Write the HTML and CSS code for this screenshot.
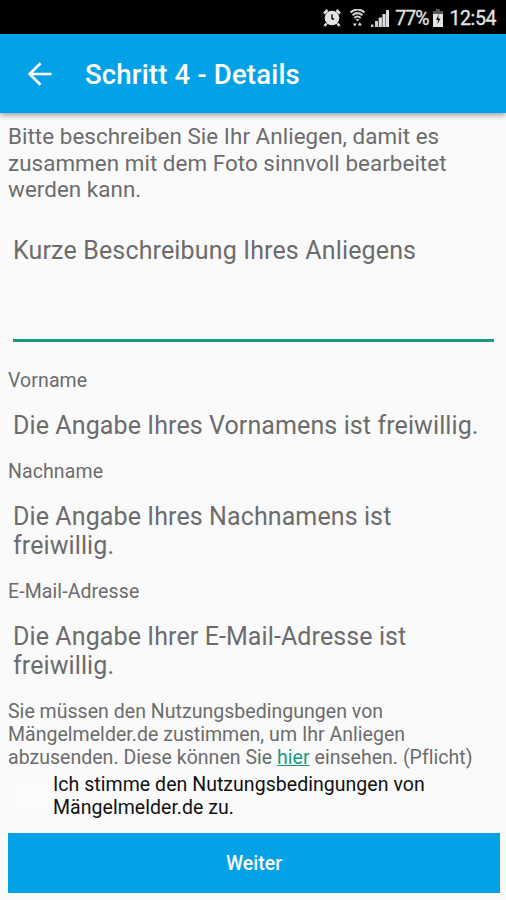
FILE: index.html
```html
<!DOCTYPE html>
<html lang="de">
<head>
	<meta charset="utf-8">
	<title>Schritt 4 - Details</title>
	<link rel="stylesheet" href="styles.css">
</head>
<body>
	<div class="statusbar">
		<svg class="alarm" width="18" height="18" viewBox="0 0 18 18">
			<path d="M1 4.5L4.5 1M13.5 1L17 4.5M3.5 14.5L1.5 17M14.5 14.5L16.5 17" stroke="#ddd" stroke-width="2.6"/>
			<circle cx="9" cy="9" r="7.3" fill="#e4e4e4"/>
			<path d="M9 5.500v4l2 1" stroke="#111" stroke-width="1.5" fill="none"/>
		</svg>
		<svg class="wifi" width="15" height="18" viewBox="0 0 15 18">
			<path d="M0.5 3.5Q7.5 -2.5 14.5 3.5M2.5 6.3Q7.5 2 12.5 6.3M4.3 9Q7.5 6 10.7 9" stroke="#ccc" stroke-width="2.1" fill="none"/>
			<path d="M5.500 10h4L7.500 12.500z" fill="#ccc"/>
			<path d="M2.8 14.500h4L4.800 17.500zM7.800 16.500h4L9.800 13z" fill="#ddd"/>
		</svg>
		<svg class="signal" width="18" height="18" viewBox="0 0 18 18">
			<path d="M0 15.500h2.500V18H0zM4 12h3v6H4z" fill="#ccc"/>
			<path d="M7.700 8.500h3.200V18H7.700zM11.400 5h3.200v13h-3.200zM15 1h3v17h-3z" fill="#ddd"/>
		</svg>
		<span class="percent">77%</span>
		<svg class="battery" width="10" height="18" viewBox="0 0 10 18">
			<path d="M3 0h4v2h3v3H0V2h3z" fill="#555"/>
			<path d="M0 5h10v13H0z" fill="#e4e4e4"/>
			<path d="M5.800 5L3 11h2.200L4.300 15.500 7.500 9.500H5.200z" fill="#111"/>
		</svg>
		<span class="clock">12:54</span>
	</div>
	<header class="toolbar">
		<svg class="back" width="24" height="24" viewBox="0 0 24 24">
			<path d="M23.500 12H2M12.500 1.200L1.700 12l10.800 10.800" stroke="#fff" stroke-width="2.700" fill="none"/>
		</svg>
		<h1>Schritt 4 - Details</h1>
	</header>
	<form class="details">
		<p class="intro">Bitte beschreiben Sie Ihr Anliegen, damit es<br>zusammen mit dem Foto sinnvoll bearbeitet<br>werden kann.</p>
		<div class="field description">Kurze Beschreibung Ihres Anliegens</div>
		<div class="label">Vorname</div>
		<div class="field">Die Angabe Ihres Vornamens ist freiwillig.</div>
		<div class="label">Nachname</div>
		<div class="field">Die Angabe Ihres Nachnamens ist<br>freiwillig.</div>
		<div class="label">E-Mail-Adresse</div>
		<div class="field">Die Angabe Ihrer E-Mail-Adresse ist<br>freiwillig.</div>
		<p class="terms">Sie müssen den Nutzungsbedingungen von<br>Mängelmelder.de zustimmen, um Ihr Anliegen<br>abzusenden. Diese können Sie <a href="#">hier</a> einsehen. (Pflicht)</p>
		<label class="agree">
			<span class="box"></span>
			<span>Ich stimme den Nutzungsbedingungen von<br>Mängelmelder.de zu.</span>
		</label>
		<button class="next" type="button">Weiter</button>
	</form>
</body>
</html>
```
FILE: styles.css
```css
body {
	margin: 0;
	background: #fafafa;
	font-family: Roboto, "Liberation Sans", sans-serif;
	color: #6c6c6c;
	white-space: nowrap;
}
.statusbar {
	display: flex;
	align-items: center;
	justify-content: flex-end;
	box-sizing: border-box;
	height: 34px;
	padding: 2px 10px 0 0;
	background: #000;
	color: #e4e4e4;
	font-size: 19.5px;
}
.wifi {
	margin-left: 9px;
}
.signal {
	margin-left: 6px;
}
.percent {
	margin-left: 6px;
	letter-spacing: -1px;
	-webkit-text-stroke: 0.3px #e4e4e4;
}
.battery {
	margin-left: 5px;
}
.clock {
	margin-left: 6px;
	letter-spacing: -0.4px;
	-webkit-text-stroke: 0.3px #e4e4e4;
}
.toolbar {
	display: flex;
	align-items: center;
	height: 79px;
	padding-left: 28px;
	background: #03a2e6;
	box-shadow: 0 2px 6px rgba(0, 0, 0, 0.4);
}
.toolbar h1 {
	margin: 2px 0 0 33px;
	color: #fff;
	font-size: 27.5px;
	font-weight: 500;
	letter-spacing: 0.17px;
}
.details {
	padding: 10px 6px 0 8px;
}
.intro {
	margin: 0;
	font-size: 22.4px;
	line-height: 26.7px;
	letter-spacing: 0.05px;
}
.field {
	margin: 18.7px 6px 19.8px 5px;
	font-size: 25px;
	line-height: 29.3px;
	letter-spacing: 0.1px;
}
.description {
	height: 103px;
	margin-top: 33px;
	margin-bottom: 27px;
	border-bottom: 3px solid #159b82;
	letter-spacing: 0.15px;
}
.label {
	font-size: 19.5px;
	line-height: 23px;
	letter-spacing: 0.1px;
}
.terms {
	margin: -0.5px 0 0;
	font-size: 19.5px;
	line-height: 23px;
	letter-spacing: 0.03px;
}
.terms a {
	color: #159b82;
}
.agree {
	display: flex;
	margin-top: 4px;
	color: #111;
	font-size: 19.5px;
	line-height: 23px;
	letter-spacing: 0.04px;
}
.box {
	width: 30px;
	height: 26px;
	margin: 9px 6px 0 9px;
	background: #fcfcfc;
}
.next {
	display: block;
	width: 492px;
	height: 60px;
	margin-top: 14px;
	padding: 2px 0 0;
	border: 0;
	background: #03a2e6;
	color: #fff;
	font-family: inherit;
	font-size: 19.5px;
	font-weight: 500;
}
```
